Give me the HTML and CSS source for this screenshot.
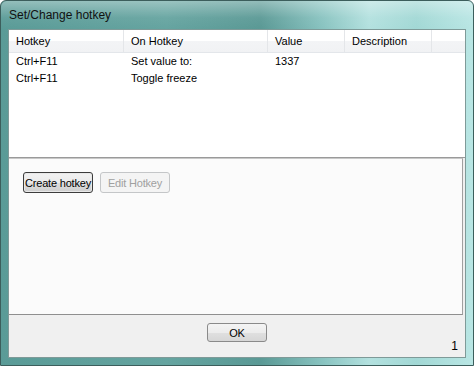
FILE: index.html
```html
<!DOCTYPE html>
<html lang="en">
<head>
    <meta charset="UTF-8">
    <title>Set/Change hotkey</title>
    <link rel="stylesheet" href="styles.css">
</head>
<body>
    <div class="window">
        <div class="titlebar">Set/Change hotkey</div>
        <div class="client">
            <div class="list">
                <div class="list-head">
                    <div class="col c1">Hotkey</div>
                    <div class="col c2">On Hotkey</div>
                    <div class="col c3">Value</div>
                    <div class="col c4">Description</div>
                    <div class="col c5"></div>
                </div>
                <div class="list-row">
                    <div class="col c1">Ctrl+F11</div>
                    <div class="col c2">Set value to:</div>
                    <div class="col c3">1337</div>
                    <div class="col c4"></div>
                </div>
                <div class="list-row">
                    <div class="col c1">Ctrl+F11</div>
                    <div class="col c2">Toggle freeze</div>
                    <div class="col c3"></div>
                    <div class="col c4"></div>
                </div>
            </div>
            <div class="panel">
                <button class="btn focused">Create hotkey</button>
                <button class="btn" disabled>Edit Hotkey</button>
            </div>
            <div class="footer">
                <button class="btn ok">OK</button>
                <span class="status">1</span>
            </div>
        </div>
    </div>
</body>
</html>
```

FILE: styles.css
```css
body {
    margin: 0;
    background-color: #fff;
    font-family: "Liberation Sans", Arial, sans-serif;
    font-size: 11px;
    color: #000;
}

.window {
    width: 474px;
    height: 366px;
    box-sizing: border-box;
    border: 1px solid #3c5e5c;
    border-radius: 6px 6px 0 0;
    padding: 0 7px 7px 7px;
    display: flex;
    flex-direction: column;
    background: linear-gradient(90deg, #5a9b97 0%, #65a4a0 35%, #5a9995 55%, #88c3c0 68%, #b3e1df 78%, #a2d8d5 88%, #b9e6e4 100%);
}

.titlebar {
    height: 28px;
    line-height: 28px;
    font-size: 12px;
    color: #111;
    background: linear-gradient(180deg, rgba(255, 255, 255, 0.35) 0%, rgba(255, 255, 255, 0.05) 60%, rgba(255, 255, 255, 0) 100%);
    margin: 0 -7px;
    padding: 0 8px;
    border-radius: 6px 6px 0 0;
}

.client {
    flex: 1;
    display: flex;
    flex-direction: column;
    border: 1px solid #7f9a98;
    background-color: #f0f0f0;
}

.list {
    height: 127px;
    background-color: #fff;
    border-bottom: 1px solid #9a9a9a;
}

.list-head {
    display: flex;
    height: 22px;
    background: linear-gradient(180deg, #ffffff 0%, #ffffff 50%, #f3f4f6 51%, #f1f2f4 100%);
    border-bottom: 1px solid #e3e6ea;
}

.list-head .col {
    line-height: 22px;
    border-right: 1px solid #e4e6e9;
}

.list-row {
    display: flex;
    height: 17px;
    line-height: 17px;
}

.col {
    box-sizing: border-box;
    padding-left: 7px;
    white-space: nowrap;
}

.c1 { width: 115px; }
.c2 { width: 144px; }
.c3 { width: 77px; }
.c4 { width: 87px; }
.c5 { flex: 1; border-right: none !important; }

.panel {
    height: 157px;
    box-sizing: border-box;
    background-color: #fbfbfb;
    border-top: 1px solid #c8c8c8;
    border-right: 1px solid #a0a0a0;
    border-bottom: 1px solid #8f8f8f;
    margin-right: 2px;
    padding: 13px 0 0 14px;
    display: flex;
    align-items: flex-start;
    gap: 7px;
}

.btn {
    font-family: "Liberation Sans", Arial, sans-serif;
    font-size: 11px;
    color: #000;
    height: 21px;
    width: 70px;
    padding: 0;
    white-space: nowrap;
    letter-spacing: -0.2px;
    border: 1px solid #707070;
    border-radius: 3px;
    background: linear-gradient(180deg, #f2f2f2 0%, #ebebeb 50%, #dddddd 51%, #cfcfcf 100%);
}

.btn.focused {
    border-color: #3c3c3c;
    box-shadow: inset 0 0 0 1px #e8e8e8;
}

.btn:disabled {
    color: #a0a0a0;
    border-color: #c4c6c8;
    background: #f4f4f4;
}

.footer {
    flex: 1;
    position: relative;
    display: flex;
    justify-content: center;
    padding-top: 8px;
}

.btn.ok {
    width: 60px;
    height: 19px;
    border-color: #8a8a8a;
    background: linear-gradient(180deg, #f4f4f4 0%, #ececec 50%, #e0e0e0 51%, #d6d6d6 100%);
}

.status {
    position: absolute;
    right: 7px;
    bottom: 4px;
    font-size: 12px;
}
```
